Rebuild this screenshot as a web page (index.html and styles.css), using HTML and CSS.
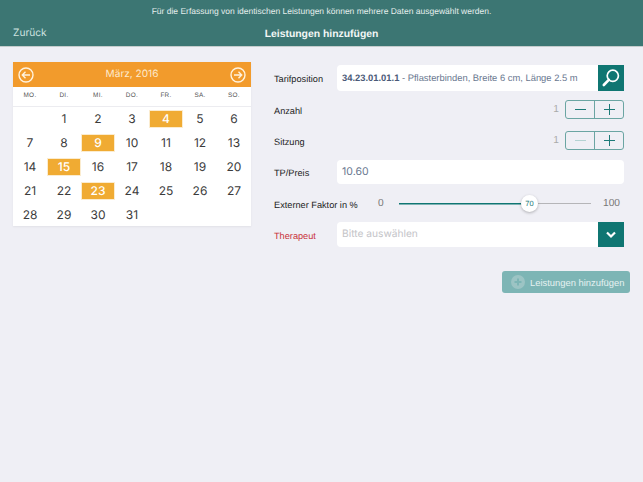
FILE: index.html
```html
<!DOCTYPE html>
<html lang="de">
<head>
  <meta charset="UTF-8">
  <title>Leistungen hinzufügen</title>
  <link rel="stylesheet" href="styles.css">
</head>
<body>
  <header class="top-bar">
    <div class="top-note">Für die Erfassung von identischen Leistungen können mehrere Daten ausgewählt werden.</div>
    <div class="top-nav">
      <span class="back-link">Zurück</span>
      <span class="page-title">Leistungen hinzufügen</span>
    </div>
  </header>
  <main class="content">
    <section class="calendar">
      <div class="cal-head">
        <svg class="cal-arrow" viewBox="0 0 16 16"><circle cx="8" cy="8" r="7"/><path d="M12 8H4.5M7.5 4.8L4.3 8l3.2 3.2"/></svg>
        <span class="cal-month">März, 2016</span>
        <svg class="cal-arrow" viewBox="0 0 16 16"><circle cx="8" cy="8" r="7"/><path d="M4 8h7.5M8.5 4.8L11.7 8l-3.2 3.2"/></svg>
      </div>
      <div class="cal-days">
        <span>MO.</span><span>DI.</span><span>MI.</span><span>DO.</span><span>FR.</span><span>SA.</span><span>SO.</span>
      </div>
      <div class="cal-grid">
        <span></span><span>1</span><span>2</span><span>3</span><span class="picked">4</span><span>5</span><span>6</span>
        <span>7</span><span>8</span><span class="picked">9</span><span>10</span><span>11</span><span>12</span><span>13</span>
        <span>14</span><span class="picked">15</span><span>16</span><span>17</span><span>18</span><span>19</span><span>20</span>
        <span>21</span><span>22</span><span class="picked">23</span><span>24</span><span>25</span><span>26</span><span>27</span>
        <span>28</span><span>29</span><span>30</span><span>31</span>
      </div>
    </section>
    <section class="form">
      <div class="row row-tarif">
        <label class="field-label">Tarifposition</label>
        <div class="input-group">
          <div class="input"><b>34.23.01.01.1</b> - Pflasterbinden, Breite 6 cm, Länge 2.5 m</div>
          <div class="input-btn">
            <svg width="20" height="20" viewBox="0 0 20 20"><circle cx="11.8" cy="7.8" r="5.6"/><path d="M7.8 11.8L2.8 17" class="handle"/></svg>
          </div>
        </div>
      </div>
      <div class="row row-step">
        <label class="field-label">Anzahl</label>
        <span class="step-value">1</span>
        <div class="stepper">
          <span class="step-btn"><svg width="11" height="11" viewBox="0 0 11 11"><path d="M0 5.5h11"/></svg></span>
          <span class="step-btn"><svg width="11" height="11" viewBox="0 0 11 11"><path d="M0 5.5h11M5.5 0v11"/></svg></span>
        </div>
      </div>
      <div class="row row-step row-sitzung">
        <label class="field-label">Sitzung</label>
        <span class="step-value">1</span>
        <div class="stepper">
          <span class="step-btn off"><svg width="11" height="11" viewBox="0 0 11 11"><path d="M0 5.5h11"/></svg></span>
          <span class="step-btn"><svg width="11" height="11" viewBox="0 0 11 11"><path d="M0 5.5h11M5.5 0v11"/></svg></span>
        </div>
      </div>
      <div class="row row-price">
        <label class="field-label">TP/Preis</label>
        <div class="input input-price">10.60</div>
      </div>
      <div class="row row-slider">
        <label class="field-label label-wide">Externer Faktor in %</label>
        <span class="slider-min">0</span>
        <div class="slider">
          <div class="slider-fill"></div>
          <div class="slider-knob">70</div>
        </div>
        <span class="slider-max">100</span>
      </div>
      <div class="row row-therapeut">
        <label class="field-label required">Therapeut</label>
        <div class="input-group">
          <div class="input placeholder">Bitte auswählen</div>
          <div class="input-btn">
            <svg width="12" height="8" viewBox="0 0 12 8"><path d="M2 1.5l4 4 4-4" class="chevron"/></svg>
          </div>
        </div>
      </div>
      <div class="actions">
        <button class="add-btn" type="button">
          <svg width="14" height="14" viewBox="0 0 14 14"><circle cx="7" cy="7" r="7" fill="#9cc4c4"/><path d="M7 3.5v7M3.5 7h7" stroke="#7db5b5" stroke-width="2"/></svg>
          Leistungen hinzufügen
        </button>
      </div>
    </section>
  </main>
</body>
</html>
```

FILE: styles.css
```css
* {
  box-sizing: border-box;
}
body {
  margin: 0;
  background: #efeff5;
  font-family: "Liberation Sans", Arial, sans-serif;
  color: #222;
  height: 482px;
  overflow: hidden;
  text-rendering: geometricPrecision;
}

.top-bar {
  height: 47px;
  background: #3c7673;
  color: #fff;
  border-bottom: 1px solid #c4cccc;
}
.top-note {
  padding-top: 6px;
  height: 23px;
  font-size: 8.5px;
  line-height: 11px;
  text-align: center;
  color: #e4eeed;
}
.top-nav {
  position: relative;
  text-align: center;
  line-height: 17px;
  padding-top: 1px;
}
.back-link {
  position: absolute;
  left: 13px;
  top: 2px;
  font-family: "Inter", sans-serif;
  font-size: 10.2px;
  color: #cfe3e0;
}
.page-title {
  font-size: 10.4px;
  font-weight: bold;
  color: #f2f7f6;
}

.content {
  display: flex;
  padding: 15px 19px 0 13px;
}

.calendar {
  width: 238px;
  height: 164px;
  background: #fff;
  flex: none;
  box-shadow: 0 1px 2px #0000000f;
}
.cal-head {
  height: 25px;
  background: #f29b2c;
  display: flex;
  align-items: center;
  justify-content: space-between;
  padding: 0 5px;
  color: #fdeacc;
}
.cal-month {
  font-family: "Inter", sans-serif;
  font-size: 10.1px;
  padding-bottom: 2px;
}
.cal-arrow {
  width: 16px;
  height: 16px;
  fill: none;
  stroke: #fff3df;
  stroke-width: 1.4;
}
.cal-days {
  height: 20px;
  display: grid;
  grid-template-columns: repeat(7, 34px);
  align-items: center;
  text-align: center;
  font-size: 6.4px;
  letter-spacing: 0.3px;
  color: #555;
  border-bottom: 1px solid #ececf0;
  padding-bottom: 2px;
}
.cal-grid {
  display: grid;
  grid-template-columns: repeat(7, 34px);
  grid-auto-rows: 24px;
  font-family: "Inter", sans-serif;
  font-size: 12px;
  color: #3c3c3c;
  text-align: center;
  line-height: 23px;
}
.cal-grid .picked {
  background: #f0ab33;
  color: #fff;
  font-weight: 500;
  margin: 3px 0;
  line-height: 15px;
  border: 1px solid #fbeccf;
}

.form {
  flex: 1;
  margin-left: 23px;
  margin-top: 3px;
  font-size: 9.2px;
}
.row {
  display: flex;
  align-items: center;
}
.field-label {
  width: 63px;
  flex: none;
  padding-top: 2px;
  color: #222;
}
.label-wide {
  width: 92px;
  white-space: nowrap;
}
.required {
  color: #c8323a;
}
.input-group {
  display: flex;
  flex: 1;
  height: 26px;
}
.input {
  flex: 1;
  background: #fff;
  border-radius: 4px 0 0 4px;
  padding: 0 5px;
  line-height: 26px;
  font-size: 9.4px;
  color: #6a7890;
}
.input b {
  color: #4b5a78;
}
.input-btn {
  width: 26px;
  background: #0f7672;
  display: flex;
  align-items: center;
  justify-content: center;
  fill: none;
  stroke: #fff;
}
.input-btn circle {
  stroke-width: 1.7;
}
.handle {
  stroke-width: 2.6;
  stroke-linecap: round;
}
.chevron {
  stroke-width: 2.2;
}

.row-tarif {
  height: 26px;
}
.row-step {
  height: 19px;
  margin-top: 9px;
}
.row-sitzung {
  margin-top: 12px;
}
.step-value {
  margin-left: auto;
  margin-right: 6px;
  font-size: 10.2px;
  color: #aaa;
}
.stepper {
  display: flex;
  width: 59px;
  height: 19px;
  border: 1px solid #6ba5a3;
  border-radius: 3px;
}
.step-btn {
  flex: 1;
  display: flex;
  align-items: center;
  justify-content: center;
  stroke: #1d7a78;
  stroke-width: 1;
}
.step-btn + .step-btn {
  border-left: 1px solid #6ba5a3;
}
.step-btn.off {
  stroke: #b4d2d2;
}

.row-price {
  margin-top: 10px;
  height: 24px;
}
.input-price {
  border-radius: 4px;
  height: 24px;
  font-family: "Inter", sans-serif;
  font-size: 10.5px;
  line-height: 23px;
}

.row-slider {
  margin-top: 11px;
  height: 17px;
}
.slider-min {
  color: #777;
  font-size: 10.2px;
  width: 33px;
  padding-left: 12px;
}
.slider {
  position: relative;
  width: 192px;
  height: 1px;
  background: #b5b5b8;
}
.slider-fill {
  height: 1px;
  width: 130px;
  background: #0f7672;
  box-shadow: 0 0.5px 0 #0f7672;
}
.slider-knob {
  position: absolute;
  left: 122px;
  top: -8px;
  width: 17px;
  height: 17px;
  border-radius: 50%;
  background: #fff;
  box-shadow: 0 1px 3px #0004;
  font-size: 7.5px;
  line-height: 17px;
  text-align: center;
  color: #1d7a78;
}
.slider-max {
  margin-left: 12px;
  color: #777;
  font-size: 10.2px;
}

.row-therapeut {
  margin-top: 10px;
  height: 25px;
}
.row-therapeut .input-group {
  height: 25px;
}
.placeholder {
  font-family: "Inter", sans-serif;
  font-size: 10.2px;
  line-height: 24px;
  color: #c4c4c8;
}

.actions {
  display: flex;
  justify-content: flex-end;
  margin-top: 24px;
  margin-right: -6px;
}
.add-btn {
  display: flex;
  align-items: center;
  gap: 5px;
  width: 128px;
  height: 22px;
  padding: 0 0 0 9px;
  border: none;
  border-radius: 3px;
  background: #7db5b5;
  color: #e6f1f1;
  font-family: "Liberation Sans", Arial, sans-serif;
  font-size: 9.4px;
  white-space: nowrap;
}
```
